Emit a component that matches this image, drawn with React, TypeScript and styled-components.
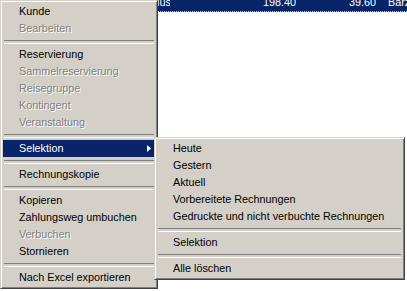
import React from "react";
import styled, { createGlobalStyle } from "styled-components";

const GlobalStyle = createGlobalStyle`
  html, body { margin: 0; padding: 0; background: #ffffff; overflow: hidden; }
  * { box-sizing: border-box; }
`;

const Screen = styled.div`
  position: relative;
  width: 407px;
  height: 291px;
  overflow: hidden;
  background: #ffffff;
  font-family: "Liberation Sans", Arial, sans-serif;
  font-size: 10.8px;
`;

const ListRow = styled.div`
  display: flex;
  height: 12px;
  background: #0a246a;
  color: #ffffff;
  border-bottom: 1px dotted #c8c8e0;
  overflow: hidden;
`;

const Cell = styled.div<{ $w: number; $right?: boolean; $pad?: number }>`
  flex: 0 0 ${(p) => p.$w}px;
  text-align: ${(p) => (p.$right ? "right" : "left")};
  padding-left: ${(p) => p.$pad ?? 0}px;
  line-height: 13px;
  margin-top: -4px;
  white-space: nowrap;
  overflow: hidden;
`;

const Menu = styled.div<{ $left: number; $top: number; $width: number }>`
  position: absolute;
  left: ${(p) => p.$left}px;
  top: ${(p) => p.$top}px;
  width: ${(p) => p.$width}px;
  background: #d4d0c8;
  border: 1px solid;
  border-color: #d4d0c8 #404040 #404040 #d4d0c8;
  box-shadow: inset 1px 1px 0 #ffffff, inset -1px -1px 0 #808080;
  padding: 2px;
  display: flex;
  flex-direction: column;
`;

const Item = styled.div<{ $disabled?: boolean; $active?: boolean }>`
  position: relative;
  height: 17px;
  line-height: 17px;
  padding-left: 16px;
  white-space: nowrap;
  color: ${(p) => (p.$active ? "#ffffff" : p.$disabled ? "#808080" : "#000000")};
  background: ${(p) => (p.$active ? "#0a246a" : "transparent")};
  text-shadow: ${(p) => (p.$disabled ? "1px 1px 0 #ffffff" : "none")};
`;

const Separator = styled.div`
  height: 9px;
  display: flex;
  align-items: center;
  padding: 0 1px;
  &::before {
    content: "";
    flex: 1;
    height: 2px;
    border-top: 1px solid #808080;
    border-bottom: 1px solid #ffffff;
  }
`;

const Arrow = styled.svg`
  position: absolute;
  right: 4px;
  top: 5px;
`;

type Entry = { label?: string; disabled?: boolean; active?: boolean; sub?: boolean; sep?: boolean };

const mainItems: Entry[] = [
  { label: "Kunde" },
  { label: "Bearbeiten", disabled: true },
  { sep: true },
  { label: "Reservierung" },
  { label: "Sammelreservierung", disabled: true },
  { label: "Reisegruppe", disabled: true },
  { label: "Kontingent", disabled: true },
  { label: "Veranstaltung", disabled: true },
  { sep: true },
  { label: "Selektion", active: true, sub: true },
  { sep: true },
  { label: "Rechnungskopie" },
  { sep: true },
  { label: "Kopieren" },
  { label: "Zahlungsweg umbuchen" },
  { label: "Verbuchen", disabled: true },
  { label: "Stornieren" },
  { sep: true },
  { label: "Nach Excel exportieren" },
];

const subItems: Entry[] = [
  { label: "Heute" },
  { label: "Gestern" },
  { label: "Aktuell" },
  { label: "Vorbereitete Rechnungen" },
  { label: "Gedruckte und nicht verbuchte Rechnungen" },
  { sep: true },
  { label: "Selektion" },
  { sep: true },
  { label: "Alle löschen" },
];

const renderEntries = (entries: Entry[]) =>
  entries.map((e, i) =>
    e.sep ? (
      <Separator key={i} />
    ) : (
      <Item key={i} $disabled={e.disabled} $active={e.active}>
        {e.label}
        {e.sub && (
          <Arrow width="4" height="7" viewBox="0 0 4 7">
            <path d="M0 0 L4 3.5 L0 7 Z" fill={e.active ? "#ffffff" : "#000000"} />
          </Arrow>
        )}
      </Item>
    )
  );

export default function App() {
  return (
    <>
      <GlobalStyle />
      <Screen>
        <ListRow>
          <Cell $w={157} />
          <Cell $w={13}>ius</Cell>
          <Cell $w={126} $right>198.40</Cell>
          <Cell $w={80} $right>39.60</Cell>
          <Cell $w={31} $pad={12}>Barzahlung</Cell>
        </ListRow>
        <Menu $left={0} $top={0} $width={158}>
          {renderEntries(mainItems)}
        </Menu>
        <Menu $left={154} $top={137} $width={251}>
          {renderEntries(subItems)}
        </Menu>
      </Screen>
    </>
  );
}
